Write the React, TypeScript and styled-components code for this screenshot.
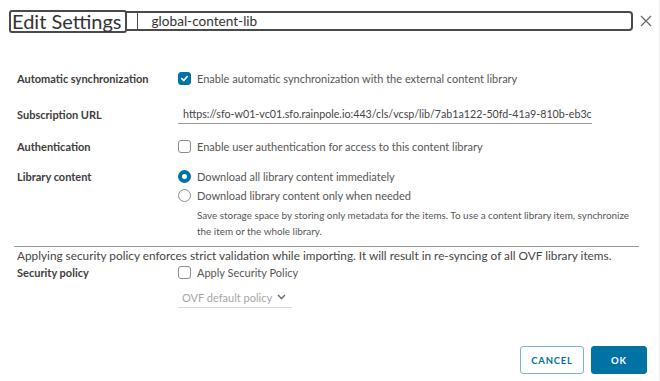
import React from "react";
import styled, { createGlobalStyle } from "styled-components";

const Global = createGlobalStyle`
  html, body { margin: 0; padding: 0; background: #fff; }
  body { font-family: Lato, "Noto Sans", sans-serif; color: #565656; }
  * { box-sizing: border-box; }
`;

const Page = styled.div`
  width: 660px;
  height: 381px;
  position: relative;
  background: #fff;
  border-right: 1px solid #eee;
  overflow: hidden;
`;

const Header = styled.div`
  display: flex;
  align-items: center;
  padding: 9px 0 0 9px;
  height: 33px;
`;

const TitleBox = styled.div`
  height: 23px;
  border: 2px solid #4a4a4a;
  border-radius: 3px;
  padding: 0 3px 0 1px;
  font-size: 20px;
  line-height: 19px;
  color: #333;
  white-space: nowrap;
  background: #fff;
  position: relative;
  z-index: 1;
`;

const NameBox = styled.div`
  flex: none;
  width: 508px;
  height: 20px;
  margin-left: -2px;
  border: 2px solid #4a4a4a;
  border-left: none;
  border-radius: 0 4px 4px 0;
  display: flex;
  align-items: center;
`;

const Divider = styled.div`
  width: 1px;
  height: 16px;
  background: #4a4a4a;
  margin-left: 12px;
`;

const NameText = styled.div`
  margin-left: 14px;
  font-size: 13.6px;
  color: #333;
`;

const Close = styled.div`
  margin-left: 6px;
  width: 14px;
  height: 14px;
  display: flex;
  align-items: center;
  justify-content: center;
`;

const Form = styled.div`
  padding: 31px 0 0 17px;
  display: flex;
  flex-direction: column;
`;

const Row = styled.div<{ $h?: number; $top?: number }>`
  display: grid;
  grid-template-columns: 161px 1fr;
  align-items: ${(p) => (p.$h ? "center" : "start")};
  height: ${(p) => (p.$h ? `${p.$h}px` : "auto")};
  margin-top: ${(p) => p.$top ?? 0}px;
`;

const Label = styled.div`
  font-size: 11px;
  font-weight: 700;
  line-height: 19px;
  color: #3d3d3d;
`;

const Control = styled.div`
  display: flex;
  align-items: center;
  font-size: 11px;
  color: #565656;
`;

const Box = styled.span<{ $on?: boolean }>`
  width: 13px;
  height: 13px;
  border-radius: 3px;
  border: 1px solid ${(p) => (p.$on ? "#0072a3" : "#8c8c8c")};
  background: ${(p) => (p.$on ? "#0072a3" : "#fff")};
  display: inline-flex;
  align-items: center;
  justify-content: center;
  margin-right: 6px;
`;

const Radio = styled.span<{ $on?: boolean }>`
  width: 13px;
  height: 13px;
  border-radius: 50%;
  border: ${(p) => (p.$on ? "4px solid #0072a3" : "1px solid #8c8c8c")};
  background: #fff;
  margin-right: 6px;
`;

const UrlInput = styled.input`
  width: 414px;
  border: none;
  border-bottom: 1px solid #9a9a9a;
  outline: none;
  padding: 0 0 3px 5px;
  margin: 2px 0 0 0;
  font-family: Lato, "Noto Sans", sans-serif;
  font-size: 10.7px;
  color: #454545;
  background: transparent;
`;

const Stack = styled.div`
  display: flex;
  flex-direction: column;
`;

const RadioLine = styled.div`
  display: flex;
  align-items: center;
  height: 19px;
  font-size: 11px;
`;

const Help = styled.div`
  font-size: 9.9px;
  line-height: 16px;
  color: #565656;
  padding-left: 19px;
  margin-top: 2px;
  white-space: nowrap;
`;

const Rule = styled.div`
  margin: 7px 20px 0 -3px;
  border-top: 1px solid #9a9a9a;
`;

const Warning = styled.div`
  font-size: 11.8px;
  color: #454545;
  margin-top: 1px;
  height: 15px;
  line-height: 15px;
  white-space: nowrap;
`;

const Select = styled.div`
  width: 114px;
  border-bottom: 1px solid #d8d8d8;
  padding: 0 0 3px 4px;
  font-size: 11px;
  color: #a6a6a6;
  display: flex;
  align-items: center;
  gap: 5px;
`;

const Footer = styled.div`
  position: absolute;
  right: 12px;
  bottom: 7px;
  display: flex;
  gap: 7px;
`;

const Btn = styled.button<{ $primary?: boolean }>`
  height: 28px;
  min-width: ${(p) => (p.$primary ? 56 : 64)}px;
  border-radius: 3px;
  border: 1px solid ${(p) => (p.$primary ? "#0072a3" : "#79b4d6")};
  background: ${(p) => (p.$primary ? "#0072a3" : "#fff")};
  color: ${(p) => (p.$primary ? "#fff" : "#0072a3")};
  font-family: Lato, "Noto Sans", sans-serif;
  font-weight: 700;
  font-size: 9.5px;
  letter-spacing: 0.8px;
  padding: 0 8px;
`;

const Check = () => (
  <svg width="9" height="9" viewBox="0 0 10 10">
    <path d="M2 5.2 L4.2 7.3 L8 2.8" fill="none" stroke="#fff" strokeWidth="1.8" strokeLinecap="round" strokeLinejoin="round" />
  </svg>
);

export default function App() {
  return (
    <Page>
      <Global />
      <Header>
        <TitleBox>Edit Settings</TitleBox>
        <NameBox>
          <Divider />
          <NameText>global-content-lib</NameText>
        </NameBox>
        <Close>
          <svg width="12" height="12" viewBox="0 0 12 12">
            <path d="M1 1 L11 11 M11 1 L1 11" stroke="#6a6a6a" strokeWidth="1.3" />
          </svg>
        </Close>
      </Header>
      <Form>
        <Row $h={28}>
          <Label>Automatic synchronization</Label>
          <Control>
            <Box $on>
              <Check />
            </Box>
            Enable automatic synchronization with the external content library
          </Control>
        </Row>
        <Row $h={45}>
          <Label>Subscription URL</Label>
          <Control>
            <UrlInput readOnly value="https://sfo-w01-vc01.sfo.rainpole.io:443/cls/vcsp/lib/7ab1a122-50fd-41a9-810b-eb3c2" />
          </Control>
        </Row>
        <Row $h={18}>
          <Label>Authentication</Label>
          <Control>
            <Box />
            Enable user authentication for access to this content library
          </Control>
        </Row>
        <Row $top={12}>
          <Label>Library content</Label>
          <Stack>
            <RadioLine>
              <Radio $on />
              Download all library content immediately
            </RadioLine>
            <RadioLine>
              <Radio />
              Download library content only when needed
            </RadioLine>
            <Help>
              Save storage space by storing only metadata for the items. To use a content library item, synchronize
              <br />
              the item or the whole library.
            </Help>
          </Stack>
        </Row>
        <Rule />
        <Warning>Applying security policy enforces strict validation while importing. It will result in re-syncing of all OVF library items.</Warning>
        <Row $h={17}>
          <Label>Security policy</Label>
          <Control>
            <Box />
            Apply Security Policy
          </Control>
        </Row>
        <Row $h={38}>
          <span />
          <Control>
            <Select>
              OVF default policy
              <svg width="9" height="6" viewBox="0 0 9 6">
                <path d="M1 1 L4.5 4.5 L8 1" fill="none" stroke="#666" strokeWidth="1.4" />
              </svg>
            </Select>
          </Control>
        </Row>
      </Form>
      <Footer>
        <Btn>CANCEL</Btn>
        <Btn $primary>OK</Btn>
      </Footer>
    </Page>
  );
}
